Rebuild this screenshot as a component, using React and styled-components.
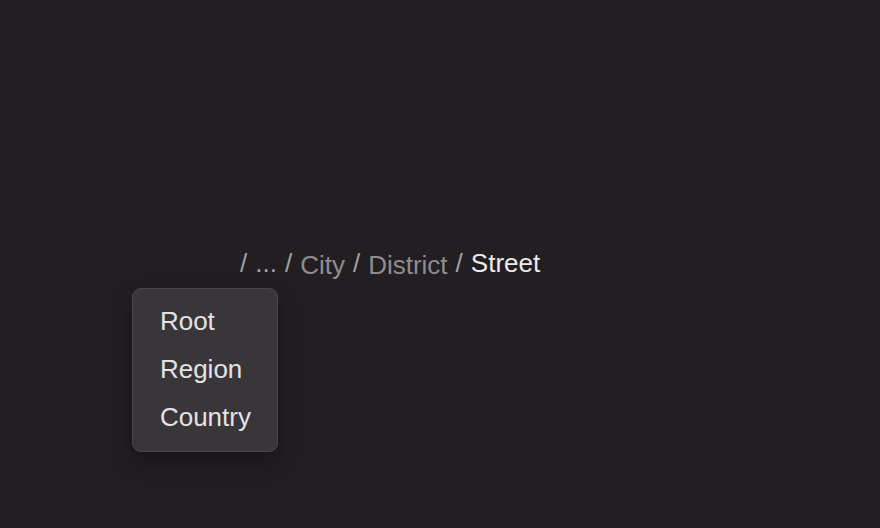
import React from "react";
import styled, { createGlobalStyle } from "styled-components";

const Global = createGlobalStyle`
  html, body { margin: 0; padding: 0; background: #221e22; }
  body { font-family: "Liberation Sans", Arial, sans-serif; }
  * { box-sizing: border-box; }
`;

const Page = styled.div`
  width: 880px;
  height: 528px;
  background: #221e22;
  padding-top: 246px;
  padding-left: 240px;
`;

const Crumbs = styled.nav`
  display: flex;
  align-items: center;
  gap: 8px;
  font-size: 26px;
  line-height: 30px;
`;

const Sep = styled.span`
  color: #a3a1a4;
`;

const TriggerWrap = styled.span`
  position: relative;
  display: inline-flex;
`;

const Trigger = styled.button`
  background: none;
  border: none;
  padding: 0;
  margin: 0;
  font: inherit;
  color: #a3a1a4;
  cursor: pointer;
`;

const Link = styled.a`
  color: #8f8c90;
  text-decoration: none;
  padding-top: 4px;
`;

const Current = styled.span`
  color: #ebe9eb;
`;

const Menu = styled.ul`
  position: absolute;
  top: 40px;
  right: -1px;
  margin: 0;
  padding: 8px 8px 10px;
  list-style: none;
  width: 146px;
  background: #39363a;
  border: 1px solid #4a474b;
  border-radius: 9px;
  box-shadow: 0 10px 24px rgba(0, 0, 0, 0.35);
`;

const Item = styled.li`
  height: 48px;
  line-height: 48px;
  padding: 0 0 0 19px;
  color: #e4e2e4;
  font-size: 26px;
  white-space: nowrap;
`;

export default function App() {
  return (
    <>
      <Global />
      <Page>
        <Crumbs>
          <Sep>/</Sep>
          <TriggerWrap>
            <Trigger>...</Trigger>
            <Menu>
              <Item>Root</Item>
              <Item>Region</Item>
              <Item>Country</Item>
            </Menu>
          </TriggerWrap>
          <Sep>/</Sep>
          <Link href="#">City</Link>
          <Sep>/</Sep>
          <Link href="#">District</Link>
          <Sep>/</Sep>
          <Current>Street</Current>
        </Crumbs>
      </Page>
    </>
  );
}
